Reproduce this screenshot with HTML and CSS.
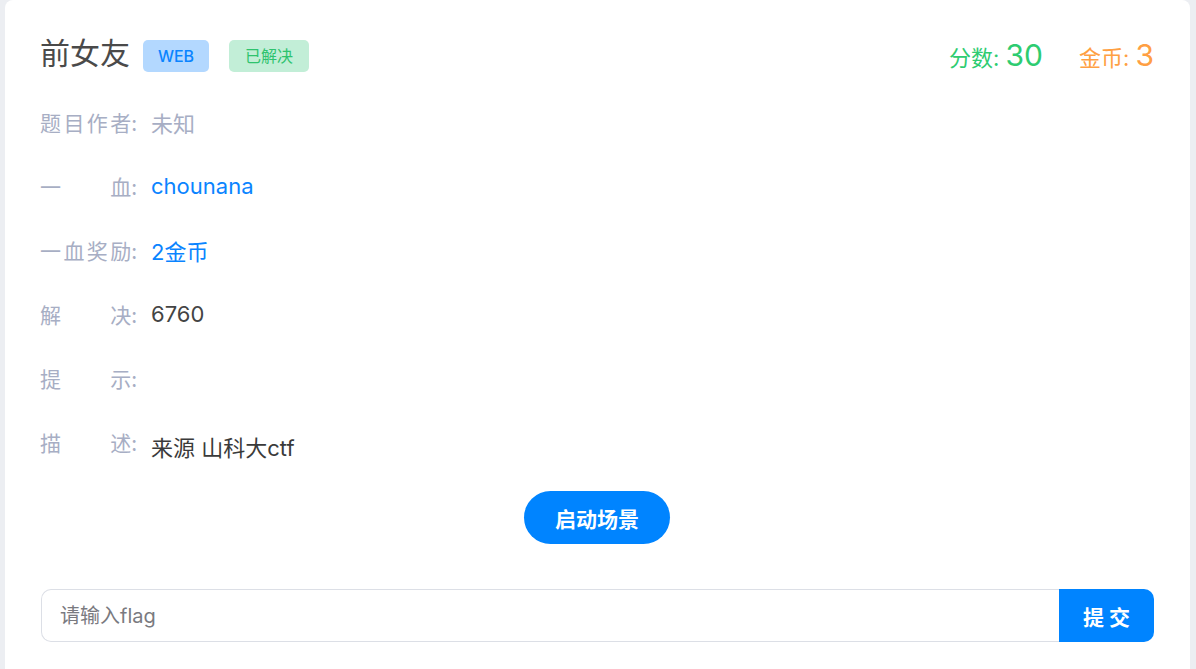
FILE: index.html
```html
<!DOCTYPE html>
<html lang="zh-CN">
<head>
    <meta charset="UTF-8">
    <title>前女友</title>
    <link rel="stylesheet" href="styles.css">
</head>
<body>

<!-- Carte du challenge -->
<div class="card">
    <div class="head">
        <div class="head-left">
            <span class="title">前女友</span>
            <span class="tag tag-web">WEB</span>
            <span class="tag tag-solved">已解决</span>
        </div>
        <div class="head-right">
            <span class="score">分数: <b>30</b></span>
            <span class="coin">金币: <b>3</b></span>
        </div>
    </div>

    <div class="info">
        <div class="row">
            <span class="label"><span class="name">题目作者</span>:</span>
            <span class="value muted">未知</span>
        </div>
        <div class="row">
            <span class="label"><span class="name">一　血</span>:</span>
            <span class="value link">chounana</span>
        </div>
        <div class="row">
            <span class="label"><span class="name">一血奖励</span>:</span>
            <span class="value link">2金币</span>
        </div>
        <div class="row">
            <span class="label"><span class="name">解　决</span>:</span>
            <span class="value">6760</span>
        </div>
        <div class="row">
            <span class="label"><span class="name">提　示</span>:</span>
            <span class="value"></span>
        </div>
        <div class="row">
            <span class="label"><span class="name">描　述</span>:</span>
            <span class="value desc">来源 山科大ctf</span>
        </div>
    </div>

    <div class="actions">
        <button class="start-btn">启动场景</button>
    </div>

    <div class="flag-form">
        <input class="flag-input" type="text" placeholder="请输入flag">
        <button class="submit-btn">提 交</button>
    </div>
</div>

</body>
</html>
```

FILE: styles.css
```css
body {
    margin: 0;
    background-color: #eceef2;
    font-family: "Inter", "Noto Sans CJK SC", sans-serif;
}

/* Carte principale */
.card {
    margin: 0 6px 0 5px;
    padding: 40px 36px 27px 35px;
    background-color: #fff;
    border-radius: 8px 8px 0 0;
    min-height: 602px;
}

.head {
    display: flex;
    justify-content: space-between;
    align-items: center;
    height: 32px;
}

.head-left {
    display: flex;
    align-items: center;
}

.title {
    font-size: 30px;
    line-height: 32px;
    color: #4a4a4a;
    margin-bottom: 6px;
    margin-right: 13px;
}

.tag {
    display: inline-block;
    height: 32px;
    line-height: 32px;
    border-radius: 5px;
    font-size: 16px;
    text-align: center;
}

.tag-web {
    width: 66px;
    background-color: #b3d8ff;
    color: #0a84ff;
    font-weight: 500;
}

.tag-solved {
    width: 80px;
    margin-left: 20px;
    background-color: #c2eed7;
    color: #2ec36e;
}

.head-right {
    display: flex;
    align-items: baseline;
    gap: 36px;
    margin-bottom: 2px;
}

.head-right span {
    font-size: 22px;
}

.head-right b {
    font-weight: normal;
    font-size: 30px;
}

.score {
    color: #2ecc71;
}

.coin {
    color: #ff9f43;
}

/* Lignes d'infos */
.info {
    margin-top: 18px;
}

.row {
    display: flex;
    align-items: center;
    height: 64px;
}

.label {
    display: flex;
    width: 97px;
    font-family: "Noto Sans CJK SC", sans-serif;
    font-size: 21px;
    color: #a7aec4;
    white-space: nowrap;
}

.name {
    flex: 1;
    text-align: justify;
    text-align-last: justify;
}

.value {
    margin-left: 14px;
    font-size: 22px;
    color: #444;
}

.muted {
    color: #a7aec4;
}

.link {
    color: #0a84ff;
}

.desc {
    padding-top: 8px;
    color: #3a3a3a;
}

.actions {
    display: flex;
    justify-content: center;
    margin-top: 17px;
}

.start-btn {
    width: 146px;
    height: 53px;
    border: none;
    border-radius: 27px;
    background-color: #0084ff;
    color: #fff;
    font-family: "Noto Sans CJK SC", sans-serif;
    font-size: 21px;
    font-weight: bold;
    cursor: pointer;
}

/* Formulaire du flag */
.flag-form {
    display: flex;
    margin-top: 45px;
    margin-left: 1px;
}

.flag-input {
    flex: 1;
    height: 53px;
    box-sizing: border-box;
    padding: 0 18px;
    border: 1px solid #dcdfe6;
    border-right: none;
    border-radius: 10px 0 0 10px;
    font-family: "Inter", "Noto Sans CJK SC", sans-serif;
    font-size: 20px;
    color: #444;
    outline: none;
}

.flag-input::placeholder {
    color: #7a7a80;
}

.submit-btn {
    width: 95px;
    height: 53px;
    border: none;
    border-radius: 0 10px 10px 0;
    background-color: #0084ff;
    color: #fff;
    font-family: "Noto Sans CJK SC", sans-serif;
    font-size: 21px;
    font-weight: bold;
    cursor: pointer;
}
```
